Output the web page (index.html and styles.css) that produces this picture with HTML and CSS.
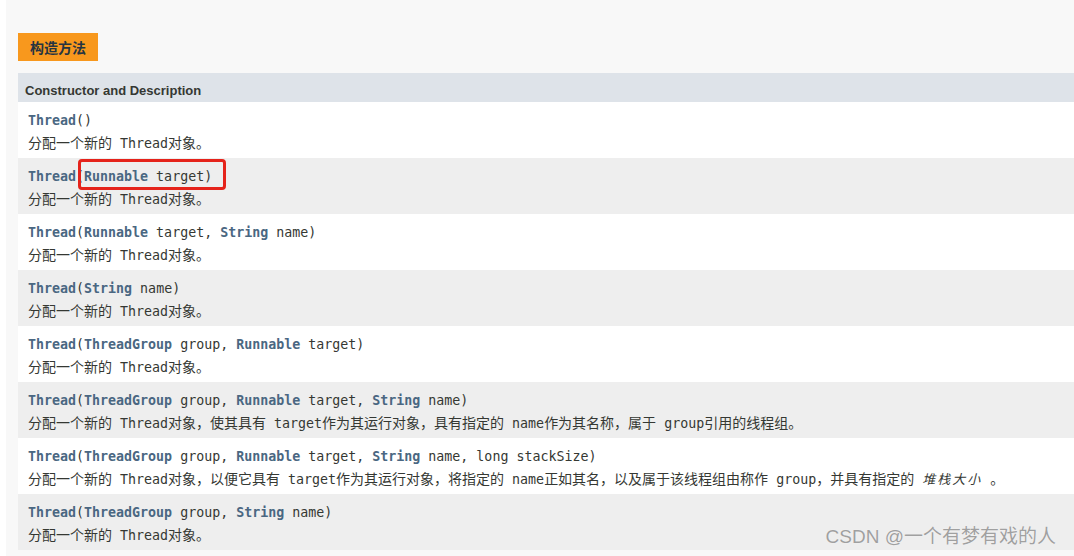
FILE: index.html
```html
<!DOCTYPE html>
<html lang="zh-CN">
<head>
<meta charset="utf-8">
<title>Thread 构造方法</title>
<link rel="stylesheet" href="styles.css">
</head>
<body>
<div class="page">
  <div class="summary">
    <div class="caption"><span>构造方法</span></div>
    <div class="table">
      <div class="thead">Constructor and Description</div>

      <div class="row">
        <div class="sig"><a class="lnk">Thread</a>()</div>
        <div class="desc">分配一个新的<code> Thread</code>对象。</div>
      </div>

      <div class="row alt">
        <div class="sig"><a class="lnk">Thread</a>(<a class="lnk">Runnable</a> target)</div>
        <div class="desc">分配一个新的<code> Thread</code>对象。</div>
        <div class="mark"></div>
      </div>

      <div class="row">
        <div class="sig"><a class="lnk">Thread</a>(<a class="lnk">Runnable</a> target, <a class="lnk">String</a> name)</div>
        <div class="desc">分配一个新的<code> Thread</code>对象。</div>
      </div>

      <div class="row alt">
        <div class="sig"><a class="lnk">Thread</a>(<a class="lnk">String</a> name)</div>
        <div class="desc">分配一个新的<code> Thread</code>对象。</div>
      </div>

      <div class="row">
        <div class="sig"><a class="lnk">Thread</a>(<a class="lnk">ThreadGroup</a> group, <a class="lnk">Runnable</a> target)</div>
        <div class="desc">分配一个新的<code> Thread</code>对象。</div>
      </div>

      <div class="row alt">
        <div class="sig"><a class="lnk">Thread</a>(<a class="lnk">ThreadGroup</a> group, <a class="lnk">Runnable</a> target, <a class="lnk">String</a> name)</div>
        <div class="desc">分配一个新的<code> Thread</code>对象，使其具有<code> target</code>作为其运行对象，具有指定的<code> name</code>作为其名称，属于<code> group</code>引用的线程组。</div>
      </div>

      <div class="row">
        <div class="sig"><a class="lnk">Thread</a>(<a class="lnk">ThreadGroup</a> group, <a class="lnk">Runnable</a> target, <a class="lnk">String</a> name, long stackSize)</div>
        <div class="desc">分配一个新的<code> Thread</code>对象，以便它具有<code> target</code>作为其运行对象，将指定的<code> name</code>正如其名，以及属于该线程组由称作<code> group</code>，并具有指定的<code> </code><i>堆栈大小</i><code> </code>。</div>
      </div>

      <div class="row alt">
        <div class="sig"><a class="lnk">Thread</a>(<a class="lnk">ThreadGroup</a> group, <a class="lnk">String</a> name)</div>
        <div class="desc">分配一个新的<code> Thread</code>对象。</div>
      </div>
    </div>
  </div>
  <div class="watermark">CSDN @一个有梦有戏的人</div>
</div>
</body>
</html>
```

FILE: styles.css
```css
html, body {
  margin: 0;
  padding: 0;
}

body {
  background: #f8f8f8;
  font-family: "Liberation Sans", Arial, "Noto Sans CJK SC", sans-serif;
  color: #353833;
  overflow: hidden;
}

.page {
  position: relative;
  height: 556px;
  border-left: 6px solid #ffffff;
  box-sizing: border-box;
}

.summary {
  padding: 33px 0 0 12px;
}

.caption {
  display: flex;
}

.caption span {
  background: #f8981d;
  color: #253441;
  font-family: "Noto Sans CJK SC", sans-serif;
  font-weight: 700;
  font-size: 14px;
  line-height: 28px;
  height: 28px;
  padding: 0 12px;
}

.table {
  margin-top: 12px;
}

.thead {
  background: #dee3e9;
  height: 26px;
  padding: 3px 0 0 7px;
  line-height: 30px;
  font-size: 13px;
  font-weight: 700;
  color: #353833;
}

.row {
  position: relative;
  background: #ffffff;
  height: 56px;
  box-sizing: border-box;
  padding: 7px 0 0 10px;
}

.row.alt {
  background: #eeeeee;
}

.sig {
  font-family: "DejaVu Sans Mono", "Noto Sans CJK SC", monospace;
  font-size: 13.3px;
  line-height: 24px;
  height: 21px;
  white-space: nowrap;
  color: #353833;
}

.lnk {
  color: #4a6782;
  font-weight: 700;
  text-decoration: none;
}

.desc {
  font-family: "Noto Sans CJK SC", sans-serif;
  font-size: 14px;
  line-height: 24px;
  height: 24px;
  white-space: nowrap;
  color: #353833;
}

.desc code {
  font-family: "DejaVu Sans Mono", monospace;
  font-size: 13.3px;
  white-space: pre;
}

.desc i {
  font-size: 13px;
  font-style: italic;
  letter-spacing: 2px;
}

.mark {
  position: absolute;
  left: 60px;
  top: 1px;
  width: 148px;
  height: 31px;
  box-sizing: border-box;
  border: 3px solid #e5231b;
  border-radius: 4px;
}

.watermark {
  position: absolute;
  right: 18px;
  bottom: 7px;
  font-family: "Liberation Sans", "Noto Sans CJK SC", sans-serif;
  font-size: 19px;
  line-height: 24px;
  color: #a0a0a0;
  text-shadow: 0 0 1px #ffffff;
}
```
